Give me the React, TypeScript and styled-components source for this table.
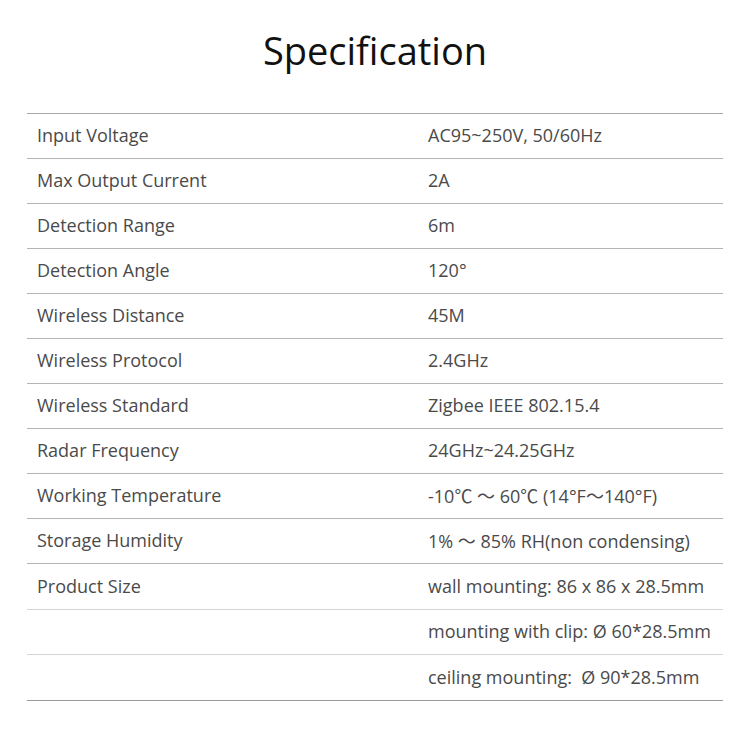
import React from 'react'
import styled, { createGlobalStyle } from 'styled-components'

const GlobalStyle = createGlobalStyle`
  body {
    margin: 0;
    background: #fff;
    font-family: 'Open Sans', 'Noto Sans CJK SC', 'Liberation Sans', sans-serif;
  }
`

const specs: [string, string][] = [
  ['Input Voltage', 'AC95~250V, 50/60Hz'],
  ['Max Output Current', '2A'],
  ['Detection Range', '6m'],
  ['Detection Angle', '120°'],
  ['Wireless Distance', '45M'],
  ['Wireless Protocol', '2.4GHz'],
  ['Wireless Standard', 'Zigbee IEEE 802.15.4'],
  ['Radar Frequency', '24GHz~24.25GHz'],
  ['Working Temperature', '-10℃ 〜 60℃ (14°F〜140°F)'],
  ['Storage Humidity', '1% 〜 85% RH(non condensing)'],
  ['Product Size', 'wall mounting: 86 x 86 x 28.5mm'],
  ['', 'mounting with clip: Ø 60*28.5mm'],
  ['', 'ceiling mounting:  Ø 90*28.5mm'],
]

const lineColor = (i: number) => {
  if (i === specs.length - 1) return '#999'
  if (i >= 10) return '#d6d6d6' // product size sub-rows
  return '#b4b4b4'
}

export default function App() {
  return (
    <Page>
      <GlobalStyle />
      <Title>Specification</Title>
      <Table>
        {specs.map(([label, value], i) => (
          <Row key={i} $tall={i === 10 || i === 12} $line={lineColor(i)}>
            <Label>{label}</Label>
            <Value>{value}</Value>
          </Row>
        ))}
      </Table>
    </Page>
  )
}

const Page = styled.div`
  width: 750px;
  height: 750px;
  padding: 27px 27px 0;
  box-sizing: border-box;
`

const Title = styled.h1`
  margin: 0;
  height: 86px;
  text-align: center;
  font-weight: 400;
  font-size: 38px;
  line-height: 46px;
  color: #111;
`

const Table = styled.div`
  border-top: 1px solid #a8a8a8;
`

const Row = styled.div<{ $line: string; $tall?: boolean }>`
  display: grid;
  grid-template-columns: 401px 1fr;
  height: ${(p) => (p.$tall ? 46 : 45)}px;
  box-sizing: border-box;
  padding-bottom: 2px;
  align-items: center;
  border-bottom: 1px solid ${(p) => p.$line};
  font-size: 18px;
  color: #4a4a4a;
`

const Label = styled.div`
  padding-left: 10px;
  white-space: pre;
`

const Value = styled.div`
  white-space: pre;
`
